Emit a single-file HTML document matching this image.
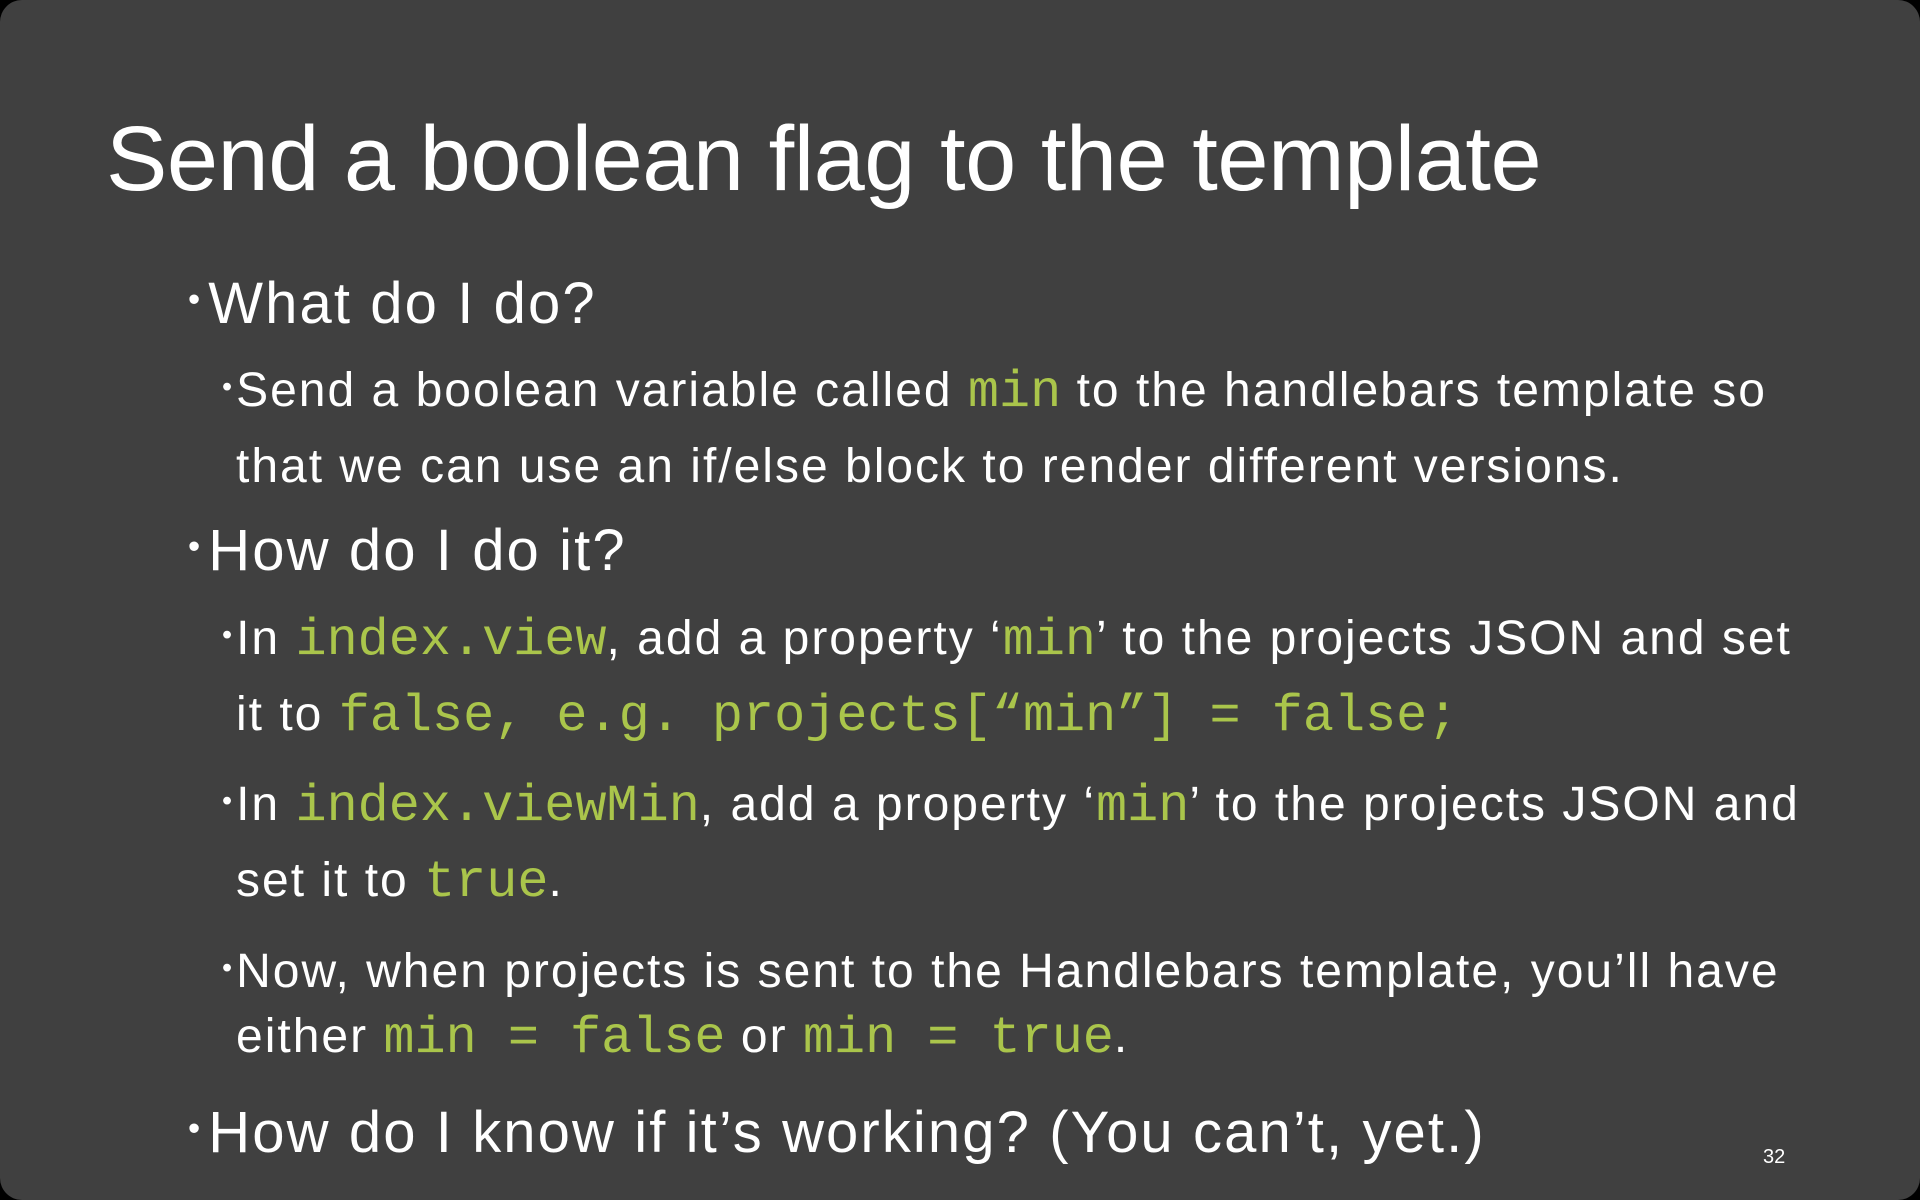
<!DOCTYPE html>
<html><head><meta charset="utf-8"><style>
html,body{margin:0;padding:0;background:#000;}
#s{position:relative;width:1920px;height:1200px;background:#404040;border-radius:22px;overflow:hidden;font-family:"Liberation Sans",sans-serif;color:#fff;}
.l{position:absolute;white-space:nowrap;line-height:1;}
.t{font-size:92px;left:106px;top:113px;letter-spacing:-0.5px;}
.a{font-size:58px;left:188px;letter-spacing:2.1px;}
.b{font-size:48px;left:222px;letter-spacing:2px;}
.c{font-size:48px;left:236px;letter-spacing:2px;}
.g{color:#aac54b;font-family:"Liberation Mono",monospace;font-size:1.08em;letter-spacing:0;}
.d{font-size:0.6em;vertical-align:0.35em;margin-right:6px;}
.b .d{margin-right:2px;}
</style></head><body><div id="s">
<div class="l t">Send a boolean flag to the template</div>
<div class="l a" style="top:275px"><span class="d">•</span>What do I do?</div>
<div class="l b" style="top:367px"><span class="d">•</span>Send a boolean variable called <span class="g">min</span> to the handlebars template so</div>
<div class="l c" style="top:443px">that we can use an if/else block to render different versions.</div>
<div class="l a" style="top:522px"><span class="d">•</span>How do I do it?</div>
<div class="l b" style="top:615px"><span class="d">•</span>In <span class="g">index.view</span>, add a property ‘<span class="g">min</span>’ to the projects JSON and set</div>
<div class="l c" style="top:691px">it to <span class="g">false, e.g. projects[“min”] = false;</span></div>
<div class="l b" style="top:781px"><span class="d">•</span>In <span class="g">index.viewMin</span>, add a property ‘<span class="g">min</span>’ to the projects JSON and</div>
<div class="l c" style="top:857px">set it to <span class="g">true</span>.</div>
<div class="l b" style="top:948px"><span class="d">•</span>Now, when projects is sent to the Handlebars template, you’ll have</div>
<div class="l c" style="top:1013px">either <span class="g">min = false</span> or <span class="g">min = true</span>.</div>
<div class="l a" style="top:1104px"><span class="d">•</span>How do I know if it’s working? (You can’t, yet.)</div>
<div class="l" style="font-size:20px;left:1763px;top:1147px;">32</div>
</div></body></html>
